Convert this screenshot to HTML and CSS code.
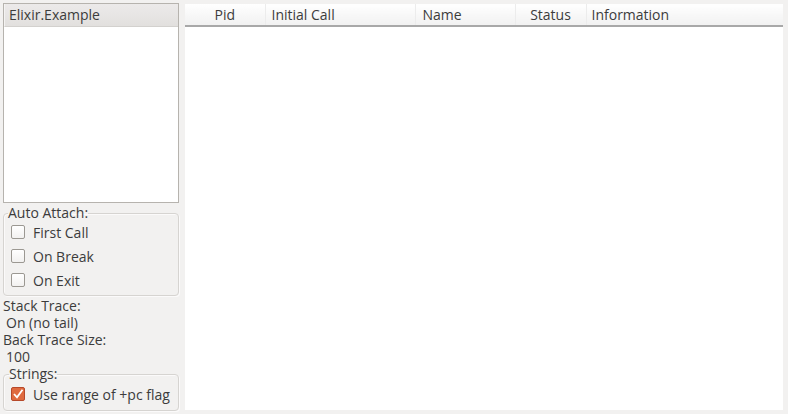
FILE: index.html
```html
<!DOCTYPE html>
<html lang="en">
<head>
  <meta charset="UTF-8">
  <title>Debugger</title>
  <link rel="stylesheet" href="styles.css">
</head>
<body>
  <div class="side">
    <div class="modules">
      <div class="modules-head">Elixir.Example</div>
      <div class="modules-body"></div>
    </div>

    <fieldset class="group attach">
      <legend>Auto Attach:</legend>
      <label class="check"><span class="box"></span>First Call</label>
      <label class="check"><span class="box"></span>On Break</label>
      <label class="check"><span class="box"></span>On Exit</label>
    </fieldset>

    <div class="info">
      <div>Stack Trace:</div>
      <div class="val">On (no tail)</div>
      <div>Back Trace Size:</div>
      <div class="val">100</div>
    </div>

    <fieldset class="group strings">
      <legend>Strings:</legend>
      <label class="check"><span class="box on">
        <svg width="12" height="12" viewBox="0 0 12 12"><path d="M2 6 L5 9.3 L10.5 1.8" fill="none" stroke="#fff" stroke-width="1.8"/></svg>
      </span>Use range of +pc flag</label>
    </fieldset>
  </div>

  <div class="main">
    <table id="procs">
      <thead>
        <tr>
          <th class="c-pid">Pid</th>
          <th class="c-call">Initial Call</th>
          <th class="c-name">Name</th>
          <th class="c-status">Status</th>
          <th class="c-info">Information</th>
        </tr>
      </thead>
      <tbody></tbody>
    </table>
  </div>
</body>
</html>
```

FILE: styles.css
```css
body {
  margin: 0;
  height: 414px;
  display: flex;
  background: #f2f1f0;
  color: #3c3c3c;
  font-family: "Open Sans", "DejaVu Sans", sans-serif;
  font-size: 14px;
  overflow: hidden;
}

.side {
  width: 176px;
  padding: 3px 0 0 3px;
  display: flex;
  flex-direction: column;
}

.modules {
  height: 198px;
  border: 1px solid #b6b3ae;
  background: white;
  display: flex;
  flex-direction: column;
}

.modules-head {
  height: 22px;
  line-height: 22px;
  padding-left: 4px;
  background: linear-gradient(#eceaea, #e2e0de);
  border-bottom: 1px solid #d3d1ce;
  border-left: 1px solid #f4f3f2;
}

.group {
  margin: 0;
  padding: 0 0 2px 7px;
  border: 1px solid #d6d4d1;
  border-radius: 4px;
  box-shadow: inset 1px 1px 0 #fbfafa, 1px 1px 0 #fbfafa;
}

.group legend {
  padding: 0;
  margin-left: -3px;
  line-height: 14px;
}

.attach {
  margin-top: 3px;
  padding-bottom: 3px;
}

.strings {
  margin-top: 2px;
  padding-bottom: 3px;
}

.strings legend {
  margin-left: -2px;
}

.check {
  display: flex;
  align-items: center;
  height: 24px;
}

.strings .check {
  height: 26px;
}

.box {
  width: 12px;
  height: 12px;
  margin-right: 8px;
  border: 1px solid #9b9892;
  border-radius: 2px;
  background: linear-gradient(#ffffff, #f2f1f0);
  display: flex;
}

.box.on {
  background: #df6a3f;
  border-color: #b6492a;
}

.info {
  margin-top: 1px;
  line-height: 17px;
}

.info .val {
  padding-left: 3px;
}

.main {
  flex: 1;
  margin: 4px 5px 4px 6px;
  background: white;
}

table {
  width: 100%;
  border-collapse: collapse;
  table-layout: fixed;
}

th {
  box-sizing: border-box;
  height: 22px;
  padding: 0 6px;
  font-weight: normal;
  text-align: left;
  background: linear-gradient(#ffffff, #f1f1f1);
  border-bottom: 2px solid #a8a8a8;
  border-right: 1px solid #ececec;
}

.c-pid { width: 80px; text-align: center; }
.c-call { width: 150px; }
.c-name { width: 100px; padding-left: 7px; }
.c-status { width: 71px; text-align: center; padding: 0; }
.c-info { border-right: none; padding-left: 5px; }
```
